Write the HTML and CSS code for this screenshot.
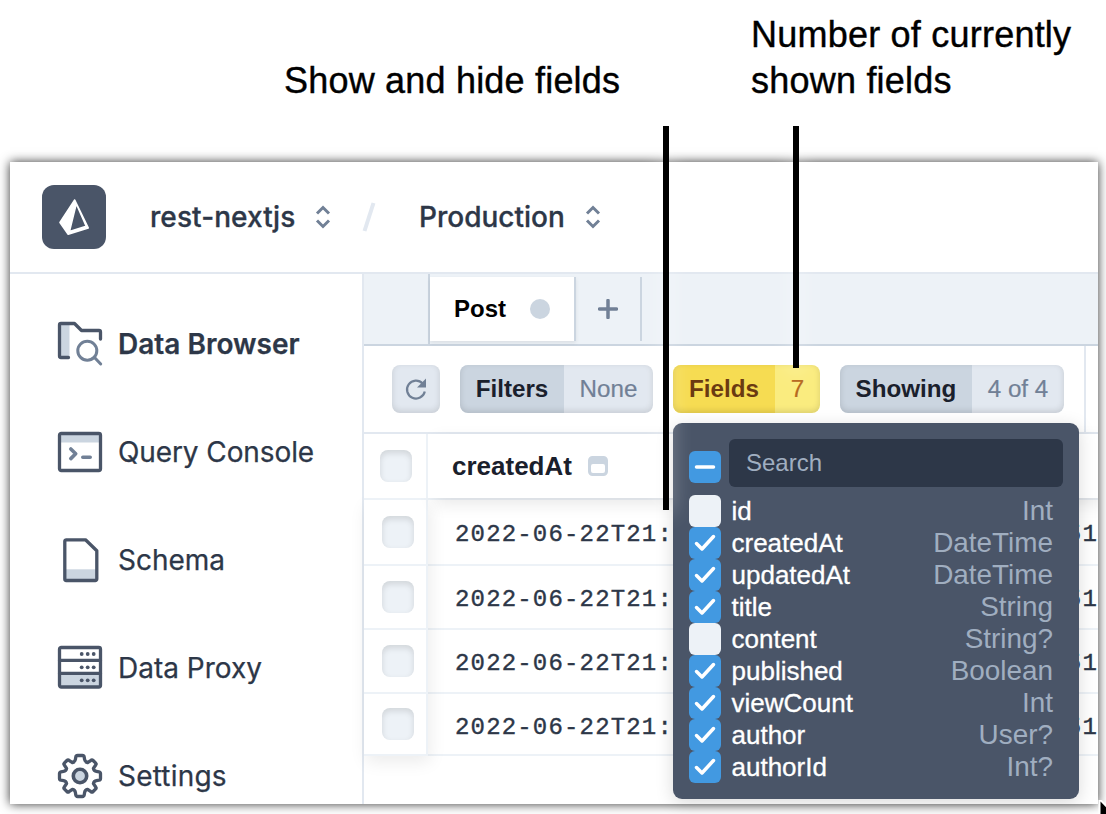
FILE: index.html
```html
<!DOCTYPE html>
<html lang="en">
<head>
<meta charset="utf-8">
<title>Data Browser</title>
<link rel="stylesheet" href="styles.css">
</head>
<body>
<div class="notes">
  <p class="note note-fields">Show and hide fields</p>
  <p class="note note-count">Number of currently<br>shown fields</p>
</div>

<div class="window">
  <header class="header">
    <svg class="logo" viewBox="0 0 64 64"><path fill="#fff" stroke="#fff" stroke-width="1.600" stroke-linejoin="round" fill-rule="evenodd" d="M32.700 15 18 37.500 26.200 49.200 46.200 42.900ZM34.300 18.600 44.200 41.200 27.500 46.400Z"/></svg>
    <span class="crumb crumb-project">rest-nextjs</span>
    <svg class="updown" viewBox="0 0 16 24"><path d="M2 8.500 8 2.500 14 8.500M2 15.500 8 21.500 14 15.500"/></svg>
    <svg class="slash" viewBox="0 0 14 30"><path d="M11.500 1 2.500 29"/></svg>
    <span class="crumb crumb-env">Production</span>
    <svg class="updown" viewBox="0 0 16 24"><path d="M2 8.500 8 2.500 14 8.500M2 15.500 8 21.500 14 15.500"/></svg>
  </header>

  <div class="main">
    <nav class="sidebar">
      <a class="nav-item active">
        <svg class="nav-icon" viewBox="0 0 48 48"><path class="tint" d="M5 5h8.500v31H5z"/><path class="dark" d="M12.500 37.500H5a1.500 1.500 0 0 1-1.500-1.500V5A1.500 1.500 0 0 1 5 3.500H18.500L25.500 10.500H43a1.500 1.500 0 0 1 1.500 1.500V19"/><circle class="mid" cx="31.300" cy="30.700" r="9.500"/><path class="mid" d="m38.500 37.500 6.200 6.500"/></svg>
        <span>Data Browser</span>
      </a>
      <a class="nav-item nav-query">
        <svg class="nav-icon" viewBox="0 0 48 48"><path class="tint" d="M5 6h38v8.600H5z"/><rect class="dark" x="3.500" y="5.500" width="41" height="37" rx="1.800"/><path class="prompt" d="m14.800 21 4.900 4.800-4.900 4.800M26.800 29.300h7.400"/></svg>
        <span>Query Console</span>
      </a>
      <a class="nav-item">
        <svg class="nav-icon" viewBox="0 0 48 48"><path class="tint" d="M9 33.300h32V44H9z"/><path class="dark" d="M10.300 3.800H29.500L40.800 14.800V43a1.500 1.500 0 0 1-1.500 1.500h-29A1.500 1.500 0 0 1 8.800 43V5.300a1.500 1.500 0 0 1 1.500-1.500Z"/></svg>
        <span>Schema</span>
      </a>
      <a class="nav-item">
        <svg class="nav-icon" viewBox="0 0 48 48"><path class="tint" d="M4 30h40v13H4z"/><rect class="dark" x="3.500" y="3.500" width="41" height="39.500" rx="1.800"/><path class="dark" d="M3.500 16.300h41M3.500 29.300h41"/><g fill="#4a5568"><circle cx="25.700" cy="10" r="1.900"/><circle cx="31.700" cy="10" r="1.900"/><circle cx="37.700" cy="10" r="1.900"/><circle cx="25.700" cy="23.300" r="1.900"/><circle cx="31.700" cy="23.300" r="1.900"/><circle cx="37.700" cy="23.300" r="1.900"/><circle cx="25.700" cy="36.300" r="1.900"/><circle cx="31.700" cy="36.300" r="1.900"/><circle cx="37.700" cy="36.300" r="1.900"/></g></svg>
        <span>Data Proxy</span>
      </a>
      <a class="nav-item nav-settings">
        <svg class="nav-icon" viewBox="0 0 48 48"><path class="dark" d="M19.400 7.600 19.800 5Q20.100 3.500 21.600 3.500H26.400Q27.900 3.500 28.200 5L28.600 7.600Q29 10 31.600 10.600L35 8.300Q36 7.400 37.100 8.500L39.500 10.900Q40.600 12 39.700 13L37.400 16.400Q38 19 40.400 19.400L43 19.800Q44.500 20.100 44.500 21.600V26.400Q44.500 27.900 43 28.200L40.400 28.600Q38 29 37.400 31.600L39.700 35Q40.600 36 39.500 37.100L37.100 39.500Q36 40.600 35 39.700L31.600 37.400Q29 38 28.600 40.400L28.200 43Q27.900 44.500 26.400 44.500H21.600Q20.100 44.500 19.800 43L19.400 40.400Q19 38 16.400 37.400L13 39.700Q12 40.600 10.900 39.500L8.500 37.100Q7.400 36 8.300 35L10.600 31.600Q10 29 7.600 28.600L5 28.200Q3.500 27.900 3.500 26.400V21.600Q3.500 20.100 5 19.800L7.600 19.400Q10 19 10.600 16.400L8.300 13Q7.400 12 8.500 10.900L10.900 8.500Q12 7.400 13 8.300L16.400 10.600Q19 10 19.400 7.600Z"/><circle cx="24" cy="24" r="6.700" fill="#cbd5e0" stroke="#4a5568" stroke-width="3.600"/></svg>
        <span>Settings</span>
      </a>
    </nav>

    <section class="content">
      <div class="tabs">
        <div class="tab-lead"></div>
        <div class="tab"><span>Post</span><i class="tab-dot"></i></div>
        <div class="tab-add"><svg viewBox="0 0 20 20"><path d="M10 1.500v17M1.500 10h17"/></svg></div>
      </div>

      <div class="toolbar">
        <div class="tools">
          <button class="refresh"><svg viewBox="0 0 24 24"><path d="M18.600 6.400A9 9 0 1 0 20.800 14.500" fill="none" stroke="#718096" stroke-width="2.200"/><path d="M22 1.500v9h-9z" fill="#718096"/></svg></button>
          <div class="pill pill-filters"><b>Filters</b><span>None</span></div>
          <div class="pill pill-fields"><b>Fields</b><span>7</span></div>
          <div class="pill pill-showing"><b>Showing</b><span>4 of 4</span></div>
        </div>
      </div>

      <div class="table-head">
        <div class="head-check"><i class="check"></i></div>
        <div class="head-cell"><span>createdAt</span><svg viewBox="0 0 20 20"><path fill="#cbd5e0" fill-rule="evenodd" d="M4.500 0h11A4.500 4.500 0 0 1 20 4.500v11a4.500 4.500 0 0 1-4.500 4.500h-11A4.500 4.500 0 0 1 0 15.500v-11A4.500 4.500 0 0 1 4.500 0ZM5 8a2 2 0 0 0-2 2v5a2 2 0 0 0 2 2h10a2 2 0 0 0 2-2v-5a2 2 0 0 0-2-2Z"/></svg></div>
      </div>

      <div class="rows">
        <div class="row-checks">
          <div class="row-check r1"><i class="check"></i></div>
          <div class="row-check r2"><i class="check"></i></div>
          <div class="row-check r3"><i class="check"></i></div>
          <div class="row-check r4"><i class="check"></i></div>
        </div>
        <div class="row-data">
          <div class="row r1"><span>2022-06-22T21:</span><span>51</span></div>
          <div class="row r2"><span>2022-06-22T21:</span><span>51</span></div>
          <div class="row r3"><span>2022-06-22T21:</span><span>51</span></div>
          <div class="row r4"><span>2022-06-22T21:</span><span>51</span></div>
        </div>
      </div>
    </section>
  </div>
</div>

<div class="popover">
  <div class="search-row">
    <span class="box partial"><svg viewBox="0 0 32 32"><path d="M7.500 16h17"/></svg></span>
    <div class="search">Search</div>
  </div>
  <div class="field"><span class="box off"></span><span class="name">id</span><span class="type">Int</span></div>
  <div class="field"><span class="box"><svg viewBox="0 0 32 32"><path d="m7.500 16.500 5.500 5.500L24.500 9.500"/></svg></span><span class="name">createdAt</span><span class="type">DateTime</span></div>
  <div class="field"><span class="box"><svg viewBox="0 0 32 32"><path d="m7.500 16.500 5.500 5.500L24.500 9.500"/></svg></span><span class="name">updatedAt</span><span class="type">DateTime</span></div>
  <div class="field"><span class="box"><svg viewBox="0 0 32 32"><path d="m7.500 16.500 5.500 5.500L24.500 9.500"/></svg></span><span class="name">title</span><span class="type">String</span></div>
  <div class="field"><span class="box off"></span><span class="name">content</span><span class="type">String?</span></div>
  <div class="field"><span class="box"><svg viewBox="0 0 32 32"><path d="m7.500 16.500 5.500 5.500L24.500 9.500"/></svg></span><span class="name">published</span><span class="type">Boolean</span></div>
  <div class="field"><span class="box"><svg viewBox="0 0 32 32"><path d="m7.500 16.500 5.500 5.500L24.500 9.500"/></svg></span><span class="name">viewCount</span><span class="type">Int</span></div>
  <div class="field"><span class="box"><svg viewBox="0 0 32 32"><path d="m7.500 16.500 5.500 5.500L24.500 9.500"/></svg></span><span class="name">author</span><span class="type">User?</span></div>
  <div class="field"><span class="box"><svg viewBox="0 0 32 32"><path d="m7.500 16.500 5.500 5.500L24.500 9.500"/></svg></span><span class="name">authorId</span><span class="type">Int?</span></div>
</div>

<div class="pointer pointer-fields"></div>
<div class="pointer pointer-count"></div>
<svg class="cursor" viewBox="0 0 8 14"><path fill="#000" stroke="#fff" stroke-width="2" d="M1.500-1V22L16 14Z"/></svg>
</body>
</html>
```
FILE: styles.css
```css
* { box-sizing: border-box; }

body {
  margin: 0;
  width: 1106px;
  height: 814px;
  position: relative;
  overflow: hidden;
  background: #fff;
  font-family: "Liberation Sans", Arial, sans-serif;
}

svg { display: block; flex: none; }

/* Annotations */
.notes { height: 162px; display: flex; padding-left: 284px; }
.note { margin: 0; font-size: 36px; line-height: 46px; color: #000; white-space: nowrap; -webkit-text-stroke: 0.4px #000; }
.note-fields { width: 467px; padding-top: 58px; letter-spacing: 0.2px; }
.note-count { padding-top: 12px; letter-spacing: 0.22px; }

.pointer { position: absolute; top: 126px; width: 6px; background: #000; box-shadow: 0 0 20px 3px rgba(255,255,255,.35); }
.pointer-fields { left: 663px; height: 384px; }
.pointer-count { left: 793px; height: 242px; }
.cursor { position: absolute; left: 1098px; top: 800px; width: 8px; height: 14px; }

/* Window */
.window {
  margin-left: 10px;
  width: 1088px;
  height: 642px;
  overflow: hidden;
  isolation: isolate;
  background: #fff;
  box-shadow: 0 0 10px rgba(0,0,0,.8);
}

.header {
  height: 112px;
  border-bottom: 2px solid #e2e8f0;
  display: flex;
  align-items: center;
  padding-left: 32px;
  color: #2d3748;
  font: 500 28px Inter, sans-serif;
}
.logo { width: 64px; height: 64px; border-radius: 12px; background: #4a5568; }
.crumb { white-space: nowrap; -webkit-text-stroke: 0.3px #2d3748; }
.crumb-project { margin-left: 44px; width: 165px; letter-spacing: 0.08px; }
.crumb-env { margin-left: 43px; width: 166px; }
.updown { width: 16px; height: 24px; fill: none; stroke: #718096; stroke-width: 3; }
.slash { width: 14px; height: 30px; margin-left: 31px; fill: none; stroke: #e2e8f0; stroke-width: 4; }

.main { display: flex; height: 530px; }
.sidebar { width: 354px; flex: none; padding-top: 16px; border-right: 2px solid #e2e8f0; overflow: hidden; }
.nav-item {
  height: 108px;
  display: flex;
  align-items: center;
  gap: 14px;
  padding-left: 46px;
  color: #2d3748;
  font: 400 28px Inter, sans-serif;
  white-space: nowrap;
  -webkit-text-stroke: 0.25px #2d3748;
}
.nav-item.active { font-weight: 600; }
.nav-query { letter-spacing: -0.1px; }
.nav-settings { letter-spacing: 0.2px; }
.nav-icon { width: 48px; height: 48px; -webkit-text-stroke: 0; }
.tint { fill: #cbd5e0; }
.dark { fill: none; stroke: #4a5568; stroke-width: 3.300; stroke-linecap: round; stroke-linejoin: round; }
.mid { fill: none; stroke: #718096; stroke-width: 3; stroke-linecap: round; }
.prompt { fill: none; stroke: #718096; stroke-width: 3.600; stroke-linecap: round; stroke-linejoin: round; }

.content { flex: 1; min-width: 0; }

/* Tabs */
.tabs { display: flex; height: 72px; background: #edf2f7; border-bottom: 2px solid #cbd5e0; font-size: 24px; }
.tab-lead { width: 66px; border-right: 2px solid #cbd5e0; }
.tab {
  width: 146px;
  height: 64px;
  margin-top: 3px;
  background: #fff;
  border-right: 2px solid #cbd5e0;
  box-shadow: 0 2px 4px rgba(0,0,0,.08);
  display: flex;
  align-items: center;
  padding-left: 24px;
  font-weight: 700;
  color: #000;
}
.tab span { width: 76px; }
.tab-dot { width: 20px; height: 20px; border-radius: 50%; background: #cbd5e0; }
.tab-add { width: 66px; height: 64px; margin-top: 3px; border-right: 2px solid #cbd5e0; display: flex; align-items: center; justify-content: center; }
.tab-add svg { width: 20px; height: 20px; stroke: #718096; stroke-width: 3.500; stroke-linecap: round; }

/* Toolbar */
.toolbar { height: 88px; border-bottom: 2px solid #e2e8f0; }
.tools { width: 722px; height: 86px; border-right: 2px solid #e2e8f0; display: flex; align-items: center; gap: 20px; padding-left: 28px; }
.refresh {
  width: 48px;
  height: 48px;
  flex: none;
  border: 0;
  border-radius: 8px;
  padding: 0;
  background: #e2e8f0;
  display: flex;
  align-items: center;
  justify-content: center;
  box-shadow: inset 0 -2px 6px rgba(0,0,0,.12);
}
.refresh svg { width: 24px; height: 24px; }
.pill { display: flex; height: 48px; flex: none; border-radius: 8px; overflow: hidden; font-size: 24.200px; line-height: 48px; text-align: center; background: #e2e8f0; color: #718096; white-space: nowrap; box-shadow: none; position: relative; }
.pill::after { content: ""; position: absolute; inset: 0; border-radius: 8px; box-shadow: inset 0 -2px 6px rgba(0,0,0,.13); }
.pill b { background: #cbd5e0; color: #1a202c; }
.pill span { flex: 1; -webkit-text-stroke: 0.2px; }
.pill-filters { width: 193px; }
.pill-filters b { width: 104px; }
.pill-fields { width: 147px; background: #faec7f; color: #b7691f; }
.pill-fields b { width: 102px; background: #f6dc52; color: #6b3a11; }
.pill-showing { width: 224px; }
.pill-showing b { width: 132px; }

/* Table */
.check { display: block; width: 32px; height: 32px; border-radius: 8px; background: #edf2f7; box-shadow: inset 0 3px 6px rgba(0,0,0,.12); }
.table-head { position: relative; z-index: 3; display: flex; height: 66px; background: #fff; border-bottom: 2px solid #edf2f7; }
.head-check { width: 64px; height: 64px; padding: 16px; border-right: 2px solid #edf2f7; position: relative; z-index: 1; background: #fff; }
.head-cell { display: flex; flex: 1; align-items: center; padding-left: 24px; color: #1a202c; font-size: 26px; font-weight: 700; box-shadow: 6px 6px 16px rgba(0,0,0,.09); }
.head-cell span { width: 136px; }
.head-cell svg { width: 20px; height: 20px; }
.rows { display: flex; }
.row-checks { width: 64px; flex: none; position: relative; z-index: 2; background: #fff; box-shadow: 2px 6px 16px rgba(0,0,0,.08); }
.row-check { padding: 16px 0 0 18px; border-right: 2px solid #edf2f7; border-bottom: 2px solid #edf2f7; }
.row-check.r2, .row-check.r3 { padding-top: 15px; }
.row-check.r4 { padding-top: 14px; }
.row-data { flex: 1; min-width: 0; overflow: hidden; }
.row { display: flex; align-items: center; padding: 5px 0 0 27px; border-bottom: 2px solid #edf2f7; color: #2d3748; font: 24px "Liberation Mono", monospace; letter-spacing: 1.170px; -webkit-text-stroke: 0.4px #2d3748; }
.row span:first-child { width: 619px; }
.r1 { height: 66px; }
.r2, .r3 { height: 64px; }
.r4 { height: 62px; }
.row.r4 { padding-top: 7px; }

/* Fields menu */
.popover {
  position: absolute;
  left: 673px;
  top: 423px;
  width: 406px;
  height: 376px;
  padding: 16px;
  border-radius: 9px;
  background: #4a5568;
  box-shadow: 0 4px 18px rgba(0,0,0,.15);
}
.search-row { display: flex; align-items: flex-start; gap: 8px; height: 56px; }
.search-row .box { margin-top: 12px; }
.search { flex: 1; height: 48px; padding-left: 17px; border-radius: 6px; background: #2d3748; color: #a0aec0; font-size: 24px; line-height: 48px; }
.field { display: flex; align-items: center; height: 32px; padding-right: 10px; white-space: nowrap; }
.box { width: 32px; height: 32px; flex: none; border-radius: 6px; background: #4299e1; }
.box.off { background: #edf2f7; }
.box svg { width: 32px; height: 32px; fill: none; stroke: #fff; stroke-width: 3.500; stroke-linecap: round; stroke-linejoin: round; }
.name { flex: 1; padding-left: 10.500px; color: #fff; font-size: 26px; line-height: 30px; -webkit-text-stroke: 0.3px #fff; }
.type { color: #a0aec0; font-size: 27.900px; line-height: 32px; }
```
